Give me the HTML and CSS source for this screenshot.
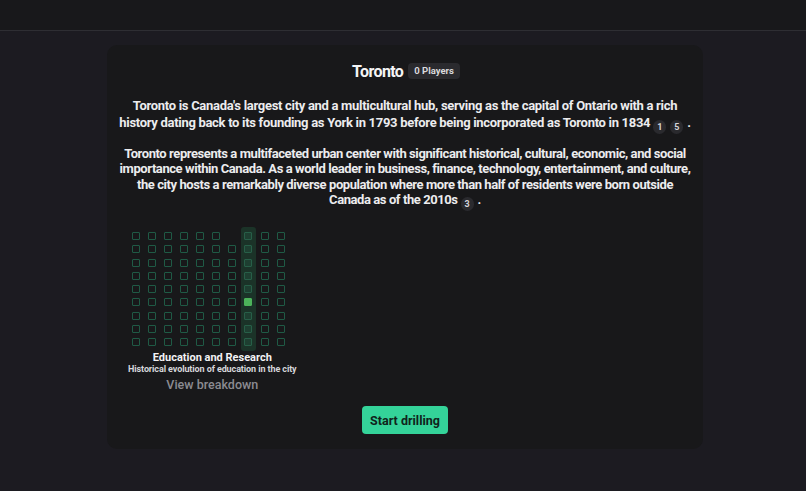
FILE: index.html
```html
<!DOCTYPE html>
<html>
<head>
<meta charset="utf-8">
<link rel="stylesheet" href="styles.css">
</head>
<body>
<header class="topbar"></header>
<main class="card">
  <div class="title-row">
    <h1 class="title">Toronto</h1>
    <span class="badge">0 Players</span>
  </div>
  <p class="para para-intro">Toronto is Canada's largest city and a multicultural hub, serving as the capital of Ontario with a rich history dating back to its founding as York in 1793 before being incorporated as Toronto in 1834<span class="cite">1</span><span class="cite">5</span>.</p>
  <p class="para">Toronto represents a multifaceted urban center with significant historical, cultural, economic, and social importance within Canada. As a world leader in business, finance, technology, entertainment, and culture, the city hosts a remarkably diverse population where more than half of residents were born outside Canada as of the 2010s<span class="cite">3</span>.</p>

  <section class="chart">
    <div class="grid">
      <div class="col"><i></i><i></i><i></i><i></i><i></i><i></i><i></i><i></i><i></i></div>
      <div class="col"><i></i><i></i><i></i><i></i><i></i><i></i><i></i><i></i><i></i></div>
      <div class="col"><i></i><i></i><i></i><i></i><i></i><i></i><i></i><i></i><i></i></div>
      <div class="col"><i></i><i></i><i></i><i></i><i></i><i></i><i></i><i></i><i></i></div>
      <div class="col"><i></i><i></i><i></i><i></i><i></i><i></i><i></i><i></i><i></i></div>
      <div class="col"><i></i><i></i><i></i><i></i><i></i><i></i><i></i><i></i><i></i></div>
      <div class="col"><i class="none"></i><i></i><i></i><i></i><i></i><i></i><i></i><i></i><i></i></div>
      <div class="col active"><i></i><i></i><i></i><i></i><i></i><i class="on"></i><i></i><i></i><i></i></div>
      <div class="col"><i></i><i></i><i></i><i></i><i></i><i></i><i></i><i></i><i></i></div>
      <div class="col"><i></i><i></i><i></i><i></i><i></i><i></i><i></i><i></i><i></i></div>
    </div>
    <div class="chart-title">Education and Research</div>
    <div class="chart-sub">Historical evolution of education in the city</div>
    <div class="chart-link">View breakdown</div>
  </section>

  <div class="actions">
    <button class="btn">Start drilling</button>
  </div>
</main>
</body>
</html>
```
FILE: styles.css
```css
* { box-sizing: border-box; }
html, body { margin: 0; padding: 0; }
body {
  background: #1c1b21;
  font-family: Roboto, "Liberation Sans", sans-serif;
  color: #eeeef0;
  min-height: 491px;
}
.topbar {
  height: 31px;
  background: #18181b;
  border-bottom: 1px solid #2e2e33;
}
.card {
  width: 596px;
  margin: 14px 0 0 calc(50% - 296px);
  background: #18181a;
  border-radius: 10px;
  padding: 14px 9px 15px;
  display: flex;
  flex-direction: column;
}
.title-row {
  display: flex;
  justify-content: center;
  align-items: center;
  gap: 5px;
  height: 24px;
  margin-left: 2px;
}
.title {
  margin: 0;
  font-size: 16px;
  font-weight: 700;
  color: #f4f4f5;
  letter-spacing: -0.6px;
}
.badge {
  background: #2a2a2e;
  color: #d9d9dc;
  font-size: 9.5px;
  font-weight: 700;
  border-radius: 4px;
  padding: 0 6px;
  height: 16px;
  line-height: 16px;
}
.para {
  margin: 15px 0 0;
  text-align: center;
  font-size: 13px;
  font-weight: 700;
  letter-spacing: -0.42px;
  line-height: 15.5px;
  color: #ececee;
}
.para-intro { letter-spacing: -0.3px; line-height: 16.5px; }
.para + .para { margin-top: 12px; }
.cite {
  display: inline-block;
  min-width: 13px;
  height: 14px;
  line-height: 14px;
  padding: 0 3px;
  margin: 0 4px 0 3px;
  border-radius: 7px;
  background: #2a2a2e;
  color: #d4d4d8;
  font-size: 9px;
  font-weight: 700;
  text-align: center;
  vertical-align: -3px;
  letter-spacing: 0;
}
.cite + .cite { margin-left: 0; }
.chart {
  margin: 16px 0 0 12px;
  align-self: flex-start;
  display: flex;
  flex-direction: column;
  align-items: center;
  white-space: nowrap;
}
.grid {
  display: flex;
  gap: 1.15px;
  align-self: flex-start;
}
.col {
  width: 15px;
  padding: 5px 0;
  display: flex;
  flex-direction: column;
  align-items: center;
  gap: 5.3px;
  border-radius: 3px;
}
.col.active { background: #1b3328; }
.col i {
  display: block;
  width: 8px;
  height: 8px;
  border: 1px solid #1f5a45;
  border-radius: 1px;
}
.col.active i { background: #1e3f31; border-color: #275f48; }
.col i.none { border-color: transparent; background: transparent; }
.col.active i.on { background: #4cb25a; border-color: #4cb25a; }
.chart-title {
  margin-top: 1px;
  font-size: 11px;
  font-weight: 700;
  color: #f2f2f4;
  line-height: 12px;
}
.chart-sub {
  font-size: 9px;
  font-weight: 700;
  color: #d6d6da;
  line-height: 10px;
  letter-spacing: -0.1px;
}
.chart-link {
  margin-top: 4px;
  font-size: 12.5px;
  font-weight: 500;
  color: #8b8b91;
  line-height: 14px;
}
.actions {
  display: flex;
  justify-content: center;
  margin-top: 14px;
}
.btn {
  width: 86px;
  height: 28px;
  border: none;
  border-radius: 4px;
  background: #34d399;
  color: #10231b;
  font-family: Roboto, "Liberation Sans", sans-serif;
  font-size: 12.5px;
  font-weight: 700;
  padding: 0;
}
```
